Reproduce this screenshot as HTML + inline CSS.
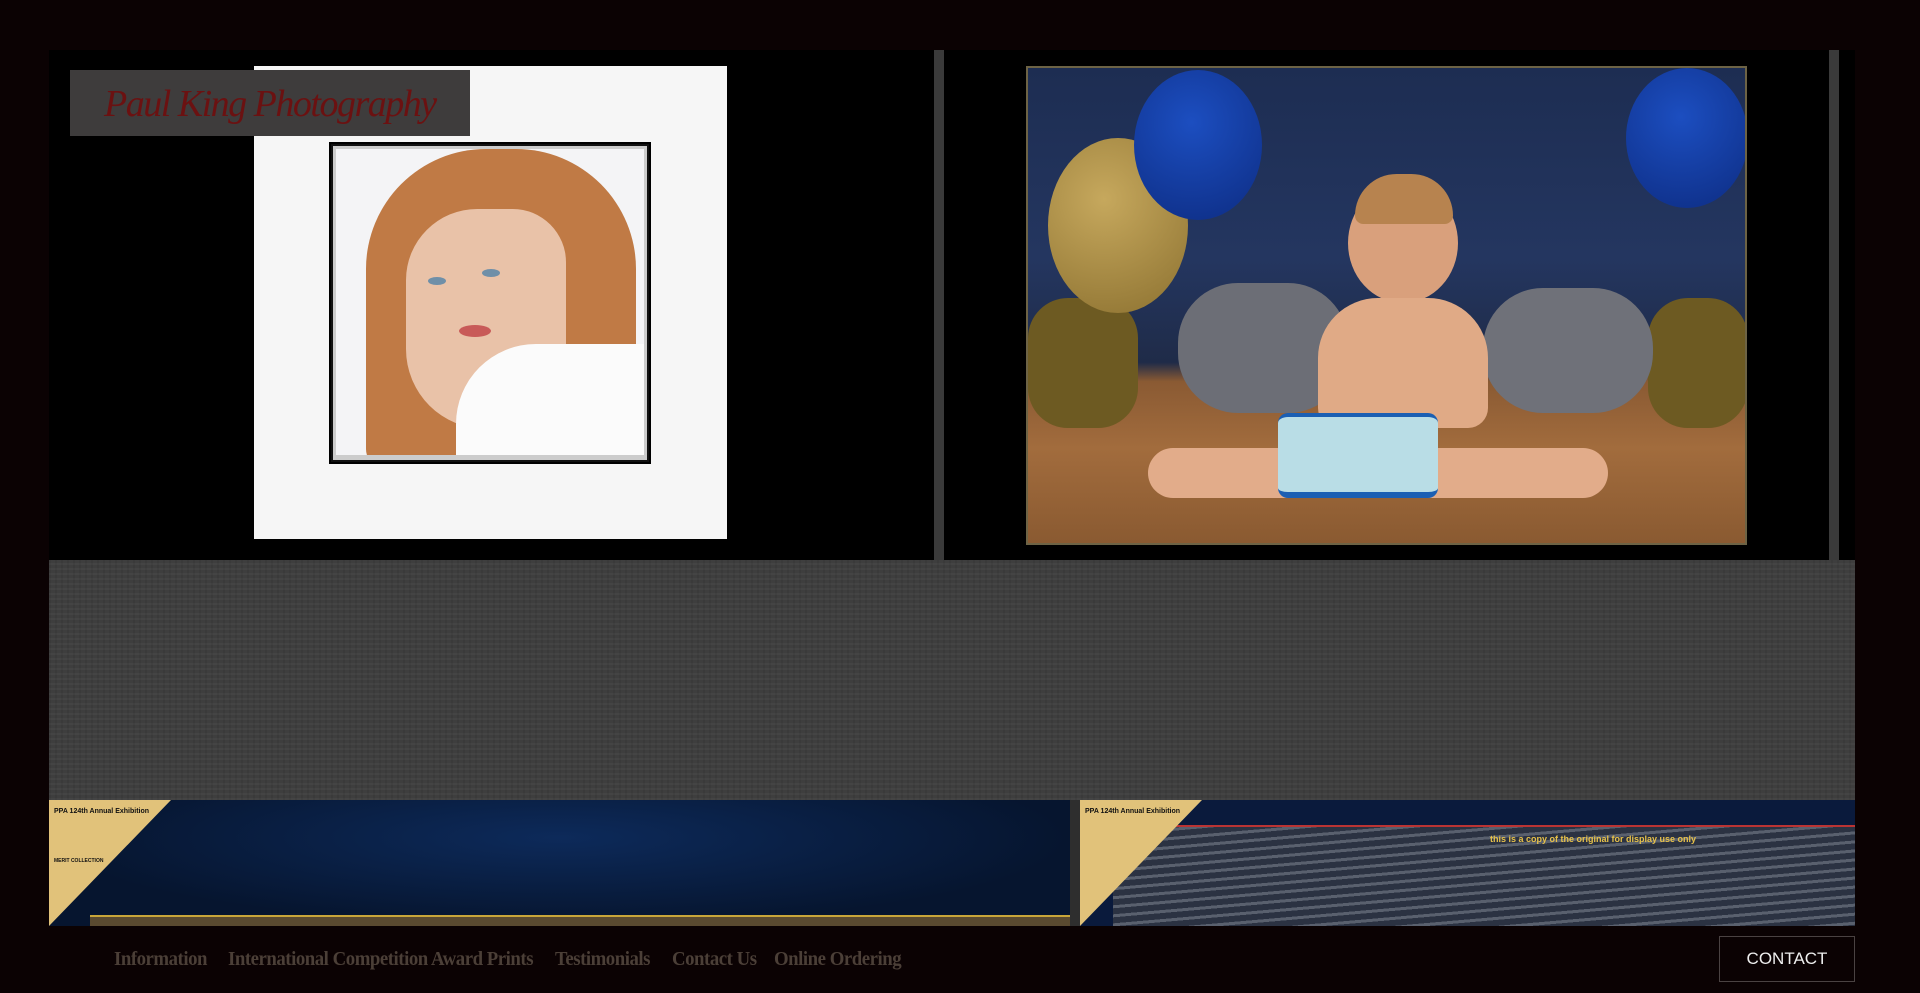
<!DOCTYPE html>
<html><head><meta charset="utf-8"><style>
*{margin:0;padding:0;box-sizing:border-box}
body{width:1920px;height:993px;background:#0b0203;position:relative;overflow:hidden;font-family:"Liberation Serif",serif}
.a{position:absolute}
.nav{position:absolute;top:948px;color:#4b3f37;font-weight:bold;font-size:20px;white-space:nowrap;transform-origin:left top;letter-spacing:-0.5px;transform:scaleX(0.94)}
</style></head><body>
<div class="a" style="left:49px;top:50px;width:885px;height:510px;background:#000"></div>
<div class="a" style="left:934px;top:50px;width:10px;height:510px;background:#3a3a3a"></div>
<div class="a" style="left:944px;top:50px;width:885px;height:510px;background:#000"></div>
<div class="a" style="left:1829px;top:50px;width:10px;height:510px;background:#3a3a3a"></div>
<div class="a" style="left:1839px;top:50px;width:16px;height:510px;background:#000"></div>
<!-- portrait mat -->
<div class="a" style="left:254px;top:66px;width:473px;height:473px;background:#f6f6f6"></div>
<div class="a" style="left:329px;top:142px;width:322px;height:322px;background:#111;border:2px solid #000"></div>
<div class="a" style="left:333px;top:146px;width:314px;height:314px;background:#ccc"></div>
<div class="a" style="left:336px;top:149px;width:308px;height:306px;background:#f4f4f6;overflow:hidden">
 <div class="a" style="left:30px;top:0;width:270px;height:320px;background:#c07a45;border-radius:120px 120px 20px 20px"></div>
 <div class="a" style="left:70px;top:60px;width:160px;height:220px;background:#e9c2a8;border-radius:80px 60px 90px 90px"></div>
 <div class="a" style="left:92px;top:128px;width:18px;height:8px;background:#6f8fa8;border-radius:50%"></div>
 <div class="a" style="left:146px;top:120px;width:18px;height:8px;background:#6f8fa8;border-radius:50%"></div>
 <div class="a" style="left:123px;top:176px;width:32px;height:12px;background:#c85a58;border-radius:50%"></div>
 <div class="a" style="left:120px;top:195px;width:200px;height:130px;background:#fbfbfb;border-radius:80px 0 0 0"></div>
</div>
<!-- logo -->
<div class="a" style="left:70px;top:70px;width:400px;height:66px;background:#3e3c3c"></div>
<div class="a" style="left:104px;top:82px;color:#6b1111;font-family:'Liberation Serif',serif;font-style:italic;font-size:38px;letter-spacing:-1.5px;white-space:nowrap;transform:scaleX(1.0);transform-origin:left top">Paul King Photography</div>
<!-- baby photo -->
<div class="a" style="left:1026px;top:66px;width:721px;height:479px;background:#6d6345;padding:2px">
 <div style="position:relative;width:100%;height:100%;background:linear-gradient(180deg,#1d2d52 0%,#243660 40%,#1f2b48 62%,#8a5a33 66%,#a26c3d 80%,#8a5a31 100%);overflow:hidden">
  <div class="a" style="left:0;top:230px;width:110px;height:130px;background:#6d5a22;border-radius:40px"></div>
  <div class="a" style="left:620px;top:230px;width:100px;height:130px;background:#6d5a22;border-radius:40px"></div>
  <div class="a" style="left:150px;top:215px;width:170px;height:130px;background:#6c6e76;border-radius:60px"></div>
  <div class="a" style="left:455px;top:220px;width:170px;height:125px;background:#6f7179;border-radius:60px"></div>
  <div class="a" style="left:20px;top:70px;width:140px;height:175px;background:radial-gradient(circle at 40% 35%,#c6a85d,#8c7130);border-radius:50%"></div>
  <div class="a" style="left:106px;top:2px;width:128px;height:150px;background:radial-gradient(circle at 45% 35%,#1c4ec0,#0d2c82);border-radius:50%"></div>
  <div class="a" style="left:598px;top:0;width:122px;height:140px;background:radial-gradient(circle at 45% 35%,#1c4ec0,#0d2c82);border-radius:50%"></div>
  <div class="a" style="left:320px;top:115px;width:110px;height:120px;background:#d9a07c;border-radius:50%"></div>
  <div class="a" style="left:327px;top:106px;width:98px;height:50px;background:#b7834f;border-radius:50px 50px 10px 10px"></div>
  <div class="a" style="left:290px;top:230px;width:170px;height:130px;background:#e0aa86;border-radius:60px 60px 20px 20px"></div>
  <div class="a" style="left:120px;top:380px;width:460px;height:50px;background:#e2ac8a;border-radius:30px"></div>
  <div class="a" style="left:250px;top:345px;width:160px;height:85px;background:#b9dde6;border-radius:10px;border-bottom:6px solid #1b5fb3;border-top:4px solid #1b5fb3"></div>
 </div>
</div>
<!-- grey band -->
<div class="a" style="left:49px;top:560px;width:1806px;height:240px;background:#3e3e3e;background-image:repeating-linear-gradient(90deg,rgba(0,0,0,.06) 0 2px,transparent 2px 6px),repeating-linear-gradient(0deg,rgba(255,255,255,.03) 0 2px,transparent 2px 5px)"></div>
<!-- bottom images -->
<div class="a" style="left:49px;top:800px;width:1021px;height:126px;background:radial-gradient(ellipse at 50% 30%,#0d2a5a,#06152f 70%);overflow:hidden">
 <div class="a" style="left:0;top:0;width:122px;height:126px;background:#e1c27a;clip-path:polygon(0 0,100% 0,0 100%)"></div>
 <div class="a" style="left:5px;top:8px;font:bold 7px 'Liberation Sans',sans-serif;color:#111">PPA 124th Annual Exhibition</div>
 <div class="a" style="left:5px;top:58px;font:bold 5px 'Liberation Sans',sans-serif;color:#111">MERIT COLLECTION</div>
 <div class="a" style="left:41px;top:115px;width:982px;height:14px;background:#5a4a30;border-top:2px solid #c8a63a"></div>
</div>
<div class="a" style="left:1070px;top:800px;width:10px;height:126px;background:#2e2e2e"></div>
<div class="a" style="left:1080px;top:800px;width:775px;height:126px;background:#0a1a3c;overflow:hidden">
 <div class="a" style="left:33px;top:25px;width:742px;height:101px;background:repeating-linear-gradient(175deg,#2b3242 0 6px,#59606e 6px 9px);border-top:2px solid #b33"></div>
 <div class="a" style="left:410px;top:34px;font:bold 9px 'Liberation Sans',sans-serif;color:#e8c24a">this is a copy of the original for display use only</div>
 <div class="a" style="left:0;top:0;width:122px;height:126px;background:#e1c27a;clip-path:polygon(0 0,100% 0,0 100%)"></div>
 <div class="a" style="left:5px;top:8px;font:bold 7px 'Liberation Sans',sans-serif;color:#111">PPA 124th Annual Exhibition</div>
</div>
<!-- nav -->
<div class="nav" style="left:114px">Information</div>
<div class="nav" style="left:228px">International Competition Award Prints</div>
<div class="nav" style="left:555px">Testimonials</div>
<div class="nav" style="left:672px">Contact Us</div>
<div class="nav" style="left:774px">Online Ordering</div>
<div class="a" style="left:1719px;top:936px;width:136px;height:46px;border:1px solid #4a4242;color:#eee;font:17px 'Liberation Sans',sans-serif;display:flex;align-items:center;justify-content:center">CONTACT</div>
</body></html>
